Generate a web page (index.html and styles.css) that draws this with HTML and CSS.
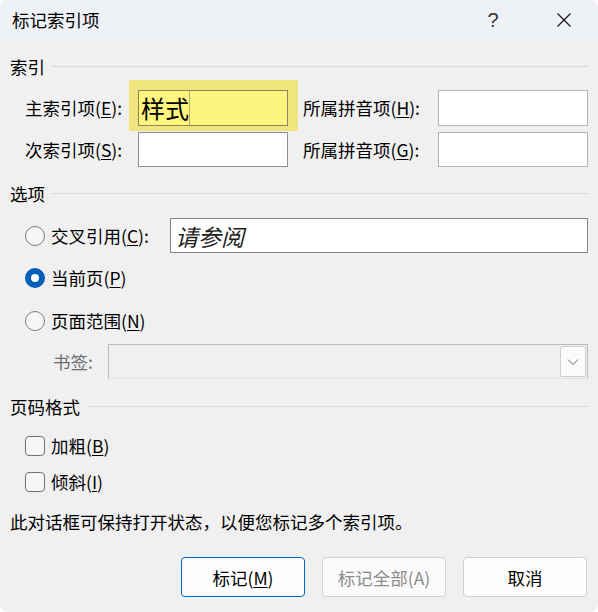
FILE: index.html
```html
<!DOCTYPE html>
<html lang="zh-CN">
<head>
    <meta charset="UTF-8">
    <meta name="viewport" content="width=device-width, initial-scale=1.0">
    <title>标记索引项</title>

    <link rel="stylesheet" href="styles.css">

</head>
<body>
    <div class="window">
        <div class="titlebar">
            <span class="title">标记索引项</span>
            <span class="help">?</span>
            <span class="close">
                <svg width="16" height="16" viewBox="0 0 16 16">
                    <path d="M1.5 1.5 L14.5 14.5 M14.5 1.5 L1.5 14.5" stroke="#1a1a1a" stroke-width="1.3" fill="none"/>
                </svg>
            </span>
        </div>

        <div class="content">
            <div class="group-head head-first">索引</div>
            <div class="entry-grid">
                <label class="row-label">主索引项(<u>E</u>):</label>
                <div class="highlight">
                    <div class="field field-main"><span class="typed">样式</span></div>
                </div>
                <label class="row-label">所属拼音项(<u>H</u>):</label>
                <div class="field field-light"></div>

                <label class="row-label">次索引项(<u>S</u>):</label>
                <div class="field"></div>
                <label class="row-label">所属拼音项(<u>G</u>):</label>
                <div class="field field-light"></div>
            </div>

            <div class="group-head head-options">选项</div>
            <div class="option-row row-cross">
                <span class="radio"></span>
                <label class="option-label cross-label">交叉引用(<u>C</u>):</label>
                <div class="field field-cross"><span class="placeholder">请参阅</span></div>
            </div>
            <div class="option-row row-current">
                <span class="radio checked"></span>
                <label class="option-label">当前页(<u>P</u>)</label>
            </div>
            <div class="option-row row-range">
                <span class="radio"></span>
                <label class="option-label">页面范围(<u>N</u>)</label>
            </div>
            <div class="bookmark-row">
                <label class="disabled-label">书签:</label>
                <div class="select-box">
                    <span class="drop-btn">
                        <svg width="12" height="8" viewBox="0 0 12 8">
                            <path d="M1 1.5 L6 6.5 L11 1.5" stroke="#666" stroke-width="1" fill="none"/>
                        </svg>
                    </span>
                </div>
            </div>

            <div class="group-head head-format">页码格式</div>
            <div class="check-row row-bold">
                <span class="checkbox"></span>
                <label class="option-label">加粗(<u>B</u>)</label>
            </div>
            <div class="check-row row-italic">
                <span class="checkbox"></span>
                <label class="option-label">倾斜(<u>I</u>)</label>
            </div>

            <p class="note">此对话框可保持打开状态，以便您标记多个索引项。</p>

            <div class="buttons">
                <button class="btn btn-default">标记(<u>M</u>)</button>
                <button class="btn" disabled>标记全部(A)</button>
                <button class="btn">取消</button>
            </div>
        </div>
    </div>
</body>
</html>
```

FILE: styles.css
```css
body {
    margin: 0;
    background-color: #fff;
    color: #000;
    font-family: "Noto Sans CJK SC", "Liberation Sans", sans-serif;
    font-size: 17.5px;
    line-height: 24px;
}

u {
    text-decoration-thickness: 1px;
    text-underline-offset: 2px;
}

.window {
    width: 598px;
    height: 612px;
    background-color: #f0f0f0;
    border-radius: 8px;
    overflow: hidden;
}

/* barra de titulo */
.titlebar {
    height: 40px;
    background-color: #eef2f6;
    display: flex;
    align-items: center;
    padding-left: 12px;
    padding-right: 14px;
}

.title {
    flex: 1;
}

.help {
    width: 40px;
    text-align: center;
    color: #333;
    font-family: "Liberation Sans", sans-serif;
    font-size: 20px;
    margin-right: 31px;
}

.close {
    width: 40px;
    height: 16px;
    display: flex;
    justify-content: center;
}

.content {
    padding: 0 10px;
}

.group-head {
    display: flex;
    align-items: center;
    height: 24px;
}

.group-head::after {
    content: "";
    flex: 1;
    height: 1px;
    background-color: #d9d9d9;
    margin-left: 7px;
    margin-top: -1px;
}

.head-first {
    margin-top: 15px;
}

.head-options {
    margin-top: 15px;
}

.head-format {
    margin-top: 16px;
}

/* campos do indice */
.entry-grid {
    display: grid;
    grid-template-columns: 113px 165px 135px 150px;
    grid-template-rows: 36px 35px;
    row-gap: 6px;
    padding-left: 15px;
    margin-top: 11px;
    align-items: center;
}

.field {
    width: 150px;
    height: 100%;
    box-sizing: border-box;
    background-color: #fff;
    border: 1px solid #8e8e98;
}

.field-light {
    border-color: #b3b3b3;
}

.highlight {
    justify-self: start;
    width: 150px;
    height: 36px;
    background-color: #f0e57c;
    padding: 10px 10px 5px 9px;
    margin: -10px -10px -5px -9px;
}

.field-main {
    background-color: #fdf57e;
    border-color: #8a8560;
    display: flex;
    align-items: center;
}

.typed {
    height: 100%;
    display: flex;
    align-items: center;
    padding-left: 2px;
    font-size: 24px;
    border-right: 1px solid #b8b070;
}

/* opcoes */
.option-row, .check-row {
    display: flex;
    align-items: center;
    padding-left: 15px;
    height: 30px;
}

.row-cross {
    height: 35px;
    margin-top: 12px;
}

.row-current {
    margin-top: 10px;
}

.row-range {
    margin-top: 13px;
}

.option-label {
    margin-left: 6px;
}

.cross-label {
    width: 119px;
}

.field-cross {
    flex: 1;
    width: auto;
    border-color: #85858f;
    display: flex;
    align-items: center;
}

.placeholder {
    font-size: 23px;
    font-style: italic;
    color: #1e1e1e;
    padding-left: 4px;
}

.radio {
    width: 20px;
    height: 20px;
    box-sizing: border-box;
    border: 1px solid #7c7c7c;
    border-radius: 50%;
    background-color: #f6f6f6;
}

.radio.checked {
    border: 6px solid #005fb8;
    background-color: #fff;
}

.bookmark-row {
    display: flex;
    align-items: center;
    height: 35px;
    margin-top: 8px;
    padding-left: 43px;
}

.disabled-label {
    width: 55px;
    color: #6d6d6d;
}

.select-box {
    flex: 1;
    height: 100%;
    box-sizing: border-box;
    border: 1px solid #bcbcbc;
    border-bottom-color: #e0e0e0;
    background-color: #f0f0f0;
    display: flex;
    justify-content: flex-end;
    padding: 1px;
}

.drop-btn {
    width: 26px;
    box-sizing: border-box;
    background-color: #fbfbfb;
    border: 1px solid #cfcfcf;
    border-radius: 2px;
    display: flex;
    align-items: center;
    justify-content: center;
}

.checkbox {
    width: 20px;
    height: 20px;
    box-sizing: border-box;
    border: 1px solid #727272;
    border-radius: 4px;
    background-color: #f6f6f6;
}

.row-bold {
    margin-top: 12px;
}

.row-italic {
    margin-top: 6px;
}

.note {
    margin: 13px 0 0 0;
    height: 24px;
}

/* botoes */
.buttons {
    display: flex;
    justify-content: flex-end;
    gap: 17px;
    margin-top: 23px;
    padding-right: 1px;
}

.btn {
    width: 124px;
    height: 40px;
    background-color: #fdfdfd;
    border: 1px solid #d0d0d0;
    border-radius: 4px;
    font-family: inherit;
    font-size: 17.5px;
    color: #000;
    padding: 0;
}

.btn-default {
    border-color: #0067c0;
}

.btn:disabled {
    color: #8c8c8c;
    background-color: #fbfbfb;
}
```
